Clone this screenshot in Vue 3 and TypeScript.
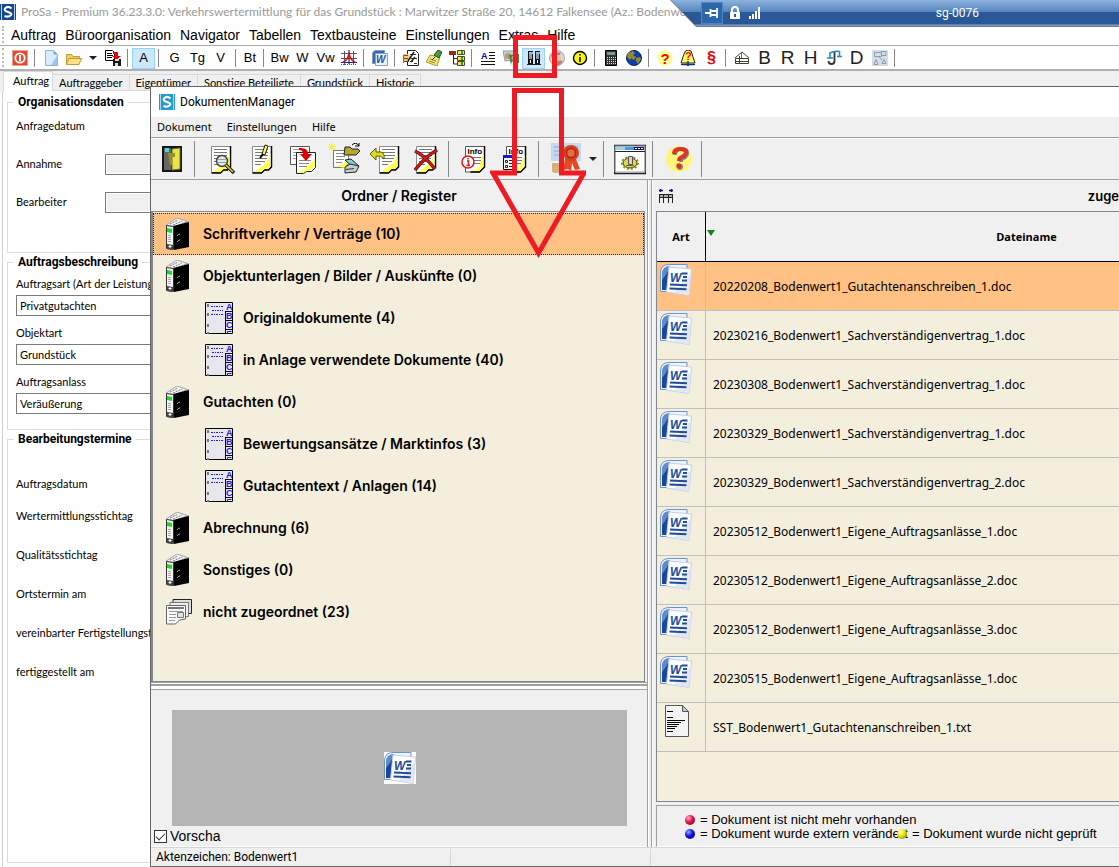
<script setup lang="ts">
import { ref } from 'vue'

interface Tool {
  kind: 'icon' | 'text' | 'sep' | 'caret'
  name?: string
  label?: string
  active?: boolean
  small?: boolean
  big?: boolean
}
interface Folder {
  title: string
  icon: 'binder' | 'register' | 'stack'
  child?: boolean
}

const sep: Tool = { kind: 'sep' }
const icon = (name: string, label: string, active = false): Tool => ({ kind: 'icon', name, label, active })
const text = (label: string, extra: Partial<Tool> = {}): Tool => ({ kind: 'text', label, ...extra })

const menu = ['Auftrag', 'Büroorganisation', 'Navigator', 'Tabellen', 'Textbausteine', 'Einstellungen', 'Extras', 'Hilfe']
const tabs = ['Auftrag', 'Auftraggeber', 'Eigentümer', 'Sonstige Beteiligte', 'Grundstück', 'Historie']

const mainTools: Tool[] = [
  icon('power', 'Beenden'), sep,
  icon('page', 'Neu'), icon('folder', 'Öffnen'), { kind: 'caret', label: 'Zuletzt geöffnet' }, icon('save', 'Speichern'), sep,
  text('A', { active: true }), sep,
  text('G'), text('Tg'), text('V'), sep,
  text('Bt', { small: true }), sep,
  text('Bw'), text('W'), text('Vw'), icon('chart', 'Diagramm'), sep,
  icon('wordSmall', 'Word'), sep,
  icon('checklist', 'Liste'), icon('note', 'Notiz'), icon('tree', 'Struktur'), sep,
  icon('textLines', 'Text'), icon('photos', 'Bilder'), icon('binders', 'DokumentenManager', true), icon('map', 'Karte'), icon('info', 'Info'), sep,
  icon('calc', 'Rechner'), icon('globe', 'Internet'), sep,
  icon('help', 'Hilfe'), icon('book', 'Handbuch'), icon('law', 'Gesetze'), sep,
  icon('house', 'Gebäude'), text('B', { big: true }), text('R', { big: true }), text('H', { big: true }),
  icon('scales', 'Justiz'), text('D', { big: true }), icon('flow', 'Ablauf'), sep,
]

const docTools: Tool[] = [
  icon('door', 'Schließen'), sep,
  icon('docSearch', 'Anzeigen'), icon('docEdit', 'Bearbeiten'), icon('docCopy', 'Kopieren'),
  icon('docScan', 'Scannen'), icon('docBack', 'Zurück'), icon('docDelete', 'Löschen'), sep,
  icon('docInfo', 'Info'), icon('docWindow', 'Info Fenster'), sep,
  icon('seal', 'Signatur'), { kind: 'caret', label: 'Signaturoptionen' }, sep,
  icon('settings', 'Einstellungen'), sep,
  icon('question', 'Hilfe'), sep,
]

const folders: Folder[] = [
  { title: 'Schriftverkehr / Verträge (10)', icon: 'binder' },
  { title: 'Objektunterlagen / Bilder / Auskünfte (0)', icon: 'binder' },
  { title: 'Originaldokumente (4)', icon: 'register', child: true },
  { title: 'in Anlage verwendete Dokumente (40)', icon: 'register', child: true },
  { title: 'Gutachten (0)', icon: 'binder' },
  { title: 'Bewertungsansätze / Marktinfos (3)', icon: 'register', child: true },
  { title: 'Gutachtentext / Anlagen (14)', icon: 'register', child: true },
  { title: 'Abrechnung (6)', icon: 'binder' },
  { title: 'Sonstiges (0)', icon: 'binder' },
  { title: 'nicht zugeordnet (23)', icon: 'stack' },
]

const files = [
  '20220208_Bodenwert1_Gutachtenanschreiben_1.doc',
  '20230216_Bodenwert1_Sachverständigenvertrag_1.doc',
  '20230308_Bodenwert1_Sachverständigenvertrag_1.doc',
  '20230329_Bodenwert1_Sachverständigenvertrag_1.doc',
  '20230329_Bodenwert1_Sachverständigenvertrag_2.doc',
  '20230512_Bodenwert1_Eigene_Auftragsanlässe_1.doc',
  '20230512_Bodenwert1_Eigene_Auftragsanlässe_2.doc',
  '20230512_Bodenwert1_Eigene_Auftragsanlässe_3.doc',
  '20230515_Bodenwert1_Eigene_Auftragsanlässe_1.doc',
  'SST_Bodenwert1_Gutachtenanschreiben_1.txt',
]

const orders = [
  { id: 'art', label: 'Auftragsart (Art der Leistung)', value: 'Privatgutachten' },
  { id: 'objekt', label: 'Objektart', value: 'Grundstück' },
  { id: 'anlass', label: 'Auftragsanlass', value: 'Veräußerung' },
]
const dates = ['Wertermittlungsstichtag', 'Qualitätsstichtag', 'Ortstermin am', 'vereinbarter Fertigstellungstermin', 'fertiggestellt am']

const selectedFolder = ref(0)
const selectedFile = ref(0)
const preview = ref(true)

// Torn sheet shared by the document icons (32 x 32 grid).
const sheet =
  '<path d="M6.500 3.500h19v20l-3 3h-4l-3 3h-9z" fill="#fff" stroke="#8a8a8a"/><path d="M25.500 3v21l-3 3h-4l-3 3h-9" fill="none" stroke="#000" stroke-width="1.500"/><path d="M24.500 11v12l-3 3h-3l-3 3H8l7-5 5-4z" fill="#ffff4d"/><path d="M9 6.500h13M9 9.500h13M9 12.500h13M9 15.500h12M9 18.500h10M9 21.500h6" stroke="#777"/>'
const infoSheet =
  '<path d="M6.500 3.500h19V24l-5 5h-14z" fill="#fff" stroke="#555"/><path d="M25.500 3v21l-5 5h-9" fill="none" stroke="#000" stroke-width="1.500"/><path d="M24.500 11v12l-4 5h-8l7-3z" fill="#ffff45"/><text x="8.500" y="11" font-family="Liberation Sans, sans-serif" font-weight="bold" font-size="8">Info</text><path d="M10 14.500h12M13 17.500h9M14 20.500h7" stroke="#777"/>'

const wordArt =
  '<path d="M.5 27.500V9Q.5.500 9 .500h18v8H8v19z" fill="#eef4fd" stroke="#6b93d0"/><path d="M2 26V10q0-8 8-8l-2 24z" fill="#5f8bcb"/><path d="M2 26V16q3-3 6-9v19z" fill="#1c4795"/><path d="M9 3l22.500 2L29 31.500 6.500 28z" fill="#fafcff" stroke="#c3cfe2"/><path d="M31 9l-2 22-15-2z" fill="#e1e8f3"/><text x="10" y="18" font-family="Liberation Sans, sans-serif" font-weight="bold" font-style="italic" font-size="12" fill="#234b96">W</text><path d="M22 9.500h5.500M23 13h4M22 16.500h5M10 20.500l17 .8M9.500 24.500l17 .8" stroke="#234b96" stroke-width="2"/>'

const art: Record<string, { box: string; body: string }> = {
  logo: { box: '0 0 16 16', body: '<rect width="16" height="16" fill="#14468c"/><path d="M1.500 0v16M14.500 0v16" stroke="#b9d2ee"/><path d="M11.500 4.500Q8 1.500 5.500 4T8 8t2.500 3.500T4.500 12" fill="none" stroke="#fff" stroke-width="2.200"/>' },
  logoLight: { box: '0 0 16 16', body: '<rect width="16" height="16" fill="#249bd0"/><path d="M1.500 0v16M14.500 0v16" stroke="#a8d8ef"/><path d="M11.500 4.500Q8 1.500 5.500 4T8 8t2.500 3.500T4.500 12" fill="none" stroke="#fff" stroke-width="2.200"/>' },
  power: { box: '0 0 16 16', body: '<rect x=".5" y=".5" width="15" height="15" fill="#e4492f" stroke="#f0a08f"/><circle cx="8" cy="8" r="4.700" fill="none" stroke="#fff" stroke-width="1.800"/><path d="M8 5v6" stroke="#fff" stroke-width="2"/>' },
  page: { box: '0 0 16 16', body: '<path d="M2.500.5h8l4 4v11h-12z" fill="#d9ecfc" stroke="#92b4d6"/><path d="M10.500.5v4h4z" fill="#78a9d8"/><path d="M8 15l6-9v9z" fill="#9cc9ee"/>' },
  folder: { box: '0 0 16 16', body: '<path d="M.5 14V4.500h5l1.500 2h6.500V8" fill="#f2cf5b" stroke="#c19a2f"/><path d="M.5 14.500L3 8.500h12.500L13 14.500z" fill="#ffe485" stroke="#c19a2f"/>' },
  save: { box: '0 0 16 16', body: '<path d="M.5.500h7l2 2v8h-9z" fill="#fff" stroke="#000"/><path d="M2 3.500h5M2 5.500h6M2 7.500h5" stroke="#000"/><path d="M8 2h5v4h3l-4.500 4L7 6h3V4H8z" fill="#f20000"/><path d="M8 9h8v7H8z" fill="#171717"/><path d="M10 9h4v2h-4zM10 13h3v3h-3z" fill="#ddd"/>' },
  chart: { box: '0 0 16 16', body: '<path d="M0 3.500h16M0 8.500h16M3.500 1v14M12.500 1v14" stroke="#556"/><path d="M0 12.500h16" stroke="#22a"/><path d="M8 0v14" stroke="#111"/><path d="M2 12q4-1 6-8 2 7 6 8" fill="none" stroke="#f00" stroke-width="1.500"/><path d="M0 14.500h16" stroke="#555" stroke-dasharray="1 1"/>' },
  wordSmall: { box: '0 0 16 16', body: '<path d="M.5 13.500V4q0-3 3-3.500h9v13z" fill="#3b64ad" stroke="#7a9dd4"/><path d="M3.500 3.500h12v12h-12z" fill="#edf4ff" stroke="#879fc6"/><text x="4" y="13" font-family="Liberation Sans, sans-serif" font-weight="bold" font-style="italic" font-size="10" fill="#28519d">W</text>' },
  checklist: { box: '0 0 16 16', body: '<path d="M4.500.500h8l3 3v12h-11z" fill="#fff" stroke="#222"/><path d="M7 4.500h6M7 8.500h7M7 11.500h3M11 13.500h3" stroke="#333"/><path d="M0 4h5l3 3-2 4H0z" fill="#f5c87b"/><path d="M0 5.500h5M0 8.500h5M0 11.500h6" stroke="#6b5212"/><path d="M5 11l6-9M8 12l4-5" stroke="#222" stroke-width="1.500"/><path d="M0 5v8" stroke="#0c9aa5" stroke-width="2"/>' },
  note: { box: '0 0 16 16', body: '<path d="M4 5l10 2-3 9-11-4z" fill="#f4e46d" stroke="#a69a35"/><path d="M4 9l6 2M3 11l6 2" stroke="#8f8a4d"/><path d="M8 5l4-5 4 2-3 6z" fill="#4b9a3e" stroke="#165a22"/><path d="M9 7l-3 3" stroke="#333"/>' },
  tree: { box: '0 0 16 16', body: '<path d="M0 1h7v4H0z" fill="#9b261a"/><path d="M4.500 5v9H8M4 8.500h4" fill="none" stroke="#222"/><path d="M8.500.500h7v4h-7zM8.500 6.500h7v4h-7zM8.500 11.500h7v4h-7z" fill="#f0e55c" stroke="#4c4b14"/><path d="M13 1v3M13 7v3M13 12v3" stroke="#329948" stroke-width="2"/>' },
  textLines: { box: '0 0 16 16', body: '<text x="1" y="9" font-family="Liberation Sans, sans-serif" font-weight="bold" font-size="9" fill="#0000a8">A</text><path d="M9 2.500h6M9 5.500h6M9 8.500h6M1 11.500h14M1 14.500h14" stroke="#111"/>' },
  photos: { box: '0 0 16 16', body: '<path d="M0 1h12l-2 9-8 1z" fill="#b4d5e8" stroke="#999"/><circle cx="5" cy="6" r="3" fill="#c7985f"/><path d="M6 5l10-1v9l-8 2z" fill="#35864d"/><path d="M7 16q2-6 5-5t3 5z" fill="#f3ead8"/><circle cx="11" cy="8" r="2.500" fill="#d39a68"/>' },
  binders: { box: '0 0 16 16', body: '<path d="M2 1h5v14H2zM9 1h5v14H9z" fill="#171717"/><path d="M3 2h4v2H3zM10 2h4v2h-4z" fill="#83bdff"/><path d="M3 4h3v5H3zM10 4h3v5h-3z" fill="#999"/><path d="M4.500 10v3M11.500 10v3" stroke="#fff"/><path d="M1 14.500h14" stroke="#222"/>' },
  map: { box: '0 0 16 16', body: '<circle cx="8" cy="8" r="7.500" fill="#d3d8df" stroke="#a5a5a5"/><path d="M2 5l5-3 5 1-3 5 5 4-5 4-5-3z" fill="#ac896f"/><circle cx="9" cy="8" r="3" fill="#e6c8a8"/>' },
  info: { box: '0 0 16 16', body: '<circle cx="8" cy="8" r="6.500" fill="#f8f514" stroke="#000" stroke-width="1.400"/><path d="M8 7v5M8 4v1.500" stroke="#000" stroke-width="1.500"/>' },
  calc: { box: '0 0 16 16', body: '<path d="M2.500.500h11v15h-11z" fill="#333" stroke="#000"/><path d="M4 2h8v3H4z" fill="#7b9d89"/><path d="M4 7.500h9M4 9.500h9M4 11.500h9M4 13.500h9" stroke="#ddd" stroke-dasharray="1 1"/>' },
  globe: { box: '0 0 16 16', body: '<circle cx="8" cy="8" r="7.500" fill="#0c3eae" stroke="#042564"/><path d="M2 3l5-2 2 2-2 2 3 2-2 3-3-2-1 2-3-3zM10 8l4-1 1 2-3 5-2-3z" fill="#968b28"/>' },
  help: { box: '0 0 16 16', body: '<circle cx="8" cy="8" r="7.500" fill="#ffff70"/><path d="M1 4h14M1 8h14M1 12h14" stroke="#fff" stroke-dasharray="1 1"/><text x="3.500" y="13.500" font-family="Liberation Sans, sans-serif" font-weight="bold" font-size="15" fill="#f00">?</text>' },
  book: { box: '0 0 16 16', body: '<path d="M1 13L4 4q1-4 4-4 4 0 4 4l3 9z" fill="#ffff60" stroke="#222"/><path d="M1 14.500h6l1 1 1-1h6M8 11v4" fill="none" stroke="#172d8b" stroke-width="1.500"/><text x="5" y="10" font-family="Liberation Sans, sans-serif" font-weight="bold" font-size="11" fill="#f00">?</text>' },
  law: { box: '0 0 16 16', body: '<text x="4" y="13" font-family="Liberation Sans, sans-serif" font-weight="bold" font-size="16" fill="#ed0000">§</text>' },
  house: { box: '0 0 16 16', body: '<path d="M1 8l7-6 7 6M1.500 8.500v5h13v-5zM5.500 6v8M2 11.500h12M5 8.500h9" fill="none" stroke="#3d3d33"/><path d="M7.500 2v6" stroke="#776b31"/>' },
  scales: { box: '0 0 16 16', body: '<path d="M8.500 2v9q0 3-3 3-3 0-3-3" fill="none" stroke="#333" stroke-width="1.800"/><path d="M3 3.500q5-3 11-2M4 3v5M13.500 1v5M1 8h6M11 6.500h5" fill="none" stroke="#168bc4" stroke-width="1.500"/>' },
  flow: { box: '0 0 16 16', body: '<path d="M0 0h16v16H0z" fill="#d9dcde"/><path d="M2.500 2.500h7v4h-7zM9 1.500h5v4H9M2 14.500l2-5 2 5zM10 13.500l2-4 2 4zM7 7l3 3" fill="none" stroke="#7da4be"/>' },
  door: { box: '0 0 32 32', body: '<path d="M6 3h20v26H6z" fill="#151515"/><path d="M8 5h7v22H8z" fill="#666"/><path d="M16 6l8-1v21l-8 1z" fill="#e8e34a" stroke="#777522"/><path d="M12 10h7v4h-3v8h-2z" fill="#99902a"/><path d="M9 5h4v4H9z" fill="#44d9de"/>' },
  docSearch: { box: '0 0 32 32', body: sheet + '<circle cx="17" cy="18" r="5.500" fill="#dcecef" stroke="#444" stroke-width="1.500"/><path d="M13 16.500h8M13 19.500h8" stroke="#93a0a0"/><path d="M21 22l8 8" stroke="#222" stroke-width="3.500"/><path d="M21 22l7 7" stroke="#e5ce20" stroke-width="1.500"/>' },
  docEdit: { box: '0 0 32 32', body: sheet + '<path d="M16 11l3-9 3 1-3 9z" fill="#fff34a" stroke="#222"/><path d="M14 15l3-4" stroke="#000" stroke-width="2"/>' },
  docCopy: { box: '0 0 32 32', body: '<path d="M3.500 3.500h19v18h-19z" fill="#fff" stroke="#555"/><path d="M6 6.500h13M6 9.500h13M6 12.500h13M6 15.500h13" stroke="#999"/><path d="M9.500 9.500h19v15l-4 4h-5l-3 2h-7z" fill="#fff" stroke="#222"/><path d="M28 16v8l-4 3h-4l-4 3h-5l8-5z" fill="#ffff4d"/><path d="M12 17.500h12M12 20.500h10M12 23.500h8" stroke="#888"/><path d="M12 5q9-1 9 6h4l-6 7-6-7h3q0-4-4-4z" fill="#e00000"/>' },
  docScan: { box: '0 0 32 32', body: '<path d="M5.500 7.500h15v13l-4 4h-11z" fill="#fff" stroke="#777"/><path d="M8 10.500h9M8 13.500h9M8 16.500h8M8 19.500h6" stroke="#888"/><path d="M6 23l8-1 4-5 3 1-4 7z" fill="#ffff4d"/><path d="M1 1l6 6M7 1L1 7M4 0v8M0 4h8" stroke="#f6ef20"/><path d="M17 4h5l2 2h6l2 2-4 4H16z" fill="#b5a52c" stroke="#222"/><path d="M24 2q4-4 7 1m-4 0h4V0" fill="none" stroke="#000"/><path d="M17 17l6-1 8 7-5 2z" fill="#82d3d5" stroke="#222"/><path d="M17 24l5-3 9 2-3 6-11 1z" fill="#c7cecc" stroke="#222"/><path d="M18 26.500l8-1" stroke="#333"/>' },
  docBack: { box: '0 0 32 32', body: '<g transform="translate(4)">' + sheet + '</g><path d="M1 11l6-6v4h5q4 1 3 7-3-4-8-3v4z" fill="#e0dc22" stroke="#5d590b"/>' },
  docDelete: { box: '0 0 32 32', body: sheet + '<path d="M5 8q9 4 20 18M27 7Q16 13 5 27" stroke="#4e1414" stroke-width="3.500" fill="none"/><path d="M5 8q9 4 20 18M27 7Q16 13 5 27" stroke="#d01818" stroke-width="2" fill="none"/>' },
  docInfo: { box: '0 0 32 32', body: infoSheet + '<circle cx="9" cy="19" r="6" fill="#fff" stroke="#d51717" stroke-width="1.500"/><path d="M8 18h1.500v4M7.500 22.500h3.500M9 15v1.500" stroke="#d51717" stroke-width="1.500" fill="none"/>' },
  docWindow: { box: '0 0 32 32', body: infoSheet + '<path d="M3.500 12.500h12v14h-12z" fill="#f4f4f4" stroke="#111"/><path d="M3 12h13v3H3z" fill="#111bd2"/><path d="M5.500 17.500h2v2h-2zM5.500 22.500h2v2h-2zM9 17.500h5M9 20.500h5M9 23.500h5" fill="none" stroke="#222"/>' },
  seal: { box: '0 0 32 32', body: '<path d="M2 0h30v18H2z" fill="#c2d9f2"/><path d="M5 4h24M5 8h24M5 12h24" stroke="#8fabc8"/><path d="M2 18h16v9H2z" fill="#eef3f9"/><path d="M3 20h9v9q-4 2-9 0z" fill="#d6b17c"/><path d="M16 16l-2 11 5-1 3 2 1-8 3 7 5-1-5-12z" fill="#e8481f"/><circle cx="22" cy="10" r="8" fill="#d8401a"/><circle cx="22" cy="10" r="4.500" fill="#ef6846" stroke="#a32d10" stroke-width="1.500"/>' },
  settings: { box: '0 0 32 32', body: '<path d="M.5 2.500h31v28H.5z" fill="#fff" stroke="#222" stroke-width="1.500"/><path d="M1 3h30v26H1z" fill="none" stroke="#999"/><path d="M2 4h9v3H2z" fill="#9bd1f0"/><path d="M11 4h9v3h-9z" fill="#3d9df0"/><path d="M20 4h10v3H20z" fill="#101070"/><path d="M21 5.500h2M24 5.500h2M27 5.500h2" stroke="#fff"/><path d="M1 8.500h30" stroke="#222"/><ellipse cx="16" cy="20" rx="7" ry="5" fill="#dfd951" stroke="#3b3911"/><ellipse cx="16" cy="20" rx="8" ry="6" fill="none" stroke="#8f8a25" stroke-width="2" stroke-dasharray="2 2"/><path d="M14.500 13.500h4v8h-4z" fill="#d4d4d4" stroke="#555"/><path d="M12 22.500h8" stroke="#6c6725"/>' },
  question: { box: '0 0 32 32', body: '<circle cx="16" cy="16" r="13" fill="#fff57a"/><path d="M12 12q0-6 6-6 7 0 6 5-1 3-4 4-2 1-2 4" fill="none" stroke="#888" stroke-width="4"/><path d="M11 11q0-5 6-5 7 0 6 4-1 3-4 4-3 1-3 4" fill="none" stroke="#dc3330" stroke-width="4"/><circle cx="17" cy="24" r="3" fill="#888"/><circle cx="16" cy="23" r="2.700" fill="#dc3330"/>' },
  binder: { box: '0 0 24 32', body: '<path d="M0 7L11 0l12 4-14 5z" fill="#f4f4f4" stroke="#a5a5a5"/><path d="M4 6l8-4M7 7l9-4M10 8l10-4" stroke="#777" stroke-dasharray="2 1"/><path d="M7 8l16-4v25l-15 3z" fill="#000"/><path d="M.5 7.500l7 1v23l-7-1z" fill="#f4f4f4" stroke="#333"/><path d="M1 10l5 1v4l-5-1z" fill="#14df1c"/><path d="M2 17.500h3M2 19.500h3M2 21.500h3M2 23.500h3" stroke="#aaa"/><path d="M1 26l6 1v5l-6-1z" fill="#444"/><path d="M2.500 28.500h3M4 27v3" stroke="#fff"/><path d="M11 18q1-2 3-2M11 24q1-2 3-2" stroke="#aaa" fill="none"/>' },
  register: { box: '0 0 28 32', body: '<path d="M.5.500h27v31H.5z" fill="#e7e6ed" stroke="#000"/><path d="M3 2v3M3 11v3M3 22v3M3 30v2" stroke="#777" stroke-width="2"/><path d="M6 4.500h13M7 8.500h11M6 12.500h12" stroke="#1919f0" stroke-dasharray="2 1 1 1"/><path d="M20.500 9.500V32M20 9.500h8M20 18.500h8M20 27.500h8" stroke="#000"/><g fill="#1717e2" font-family="Liberation Sans, sans-serif" font-size="9"><text x="21" y="8">A</text><text x="21" y="17">B</text><text x="21" y="26">C</text></g><path d="M22.500 32v-2.500h4" fill="none" stroke="#1717e2"/>' },
  stack: { box: '0 0 26 26', body: '<path d="M7 .5h18.500v14H7z" fill="#ddd" stroke="#222"/><path d="M4 3.500h18.500v14H4z" fill="#eee" stroke="#777"/><path d="M.5 6.500h19V20l-6 1-4 4h-9z" fill="#f9f9f9" stroke="#666"/><path d="M2 9h16" stroke="#777" stroke-width="2"/><path d="M3 12.500h14M3 15.500h7M3 18.500h7M3 21.500h6" stroke="#999"/><path d="M11.500 13.500h6v5h-6z" fill="#e2e2dd" stroke="#777"/>' },
  word: { box: '0 0 32 32', body: wordArt },
  txt: { box: '0 0 24 32', body: '<path d="M.5.500h17l6 6v25H.5z" fill="#f4f4f4" stroke="#555"/><path d="M17.500.500l6 6h-6z" fill="#ccc" stroke="#555"/><path d="M2 6.500h6M2 12.500h6M2 15.500h18M2 17.500h14M2 19.500h12M2 21.500h10M2 23.500h8M2 26.500h6" stroke="#000"/>' },
  columns: { box: '0 0 14 14', body: '<path d="M0 1.500h4M1.500 0v3M10 1.500h4M12.500 0v3" stroke="#101080" stroke-width="1.500"/><path d="M1 6h12v2H1z" fill="#aaa"/><path d="M0 5.500h14M0 8.500h14M.5 5v9M4.500 5v9M9.500 5v9M13.500 5v9" stroke="#222"/>' },
  pin: { box: '0 0 16 16', body: '<path d="M1 8h5M6.500 4v8M7 6h5M7 10h5M13 3v10" fill="none" stroke="#fff" stroke-width="1.800"/><path d="M7 9h6v2H7z" fill="#fff"/>' },
  lock: { box: '0 0 16 16', body: '<path d="M3 7h10v7H3z" fill="#fff"/><path d="M5 8V5q0-3 3-3t3 3v3" fill="none" stroke="#fff" stroke-width="2"/><path d="M8 9v3" stroke="#2b5797" stroke-width="2"/>' },
  signal: { box: '0 0 16 16', body: '<path d="M3 11v3M6 9v5M9 6v8M12 2v12" stroke="#fff" stroke-width="2"/>' },
}
</script>

<template>
  <main class="desktop">
    <header class="titlebar">
      <svg class="i16" :viewBox="art.logo.box" v-html="art.logo.body"></svg>
      <h1>ProSa - Premium 36.23.3.0: Verkehrswertermittlung für das Grundstück : Marwitzer Straße 20, 14612 Falkensee (Az.: Bodenwert1)</h1>
    </header>

    <nav class="menubar" aria-label="Hauptmenü">
      <button v-for="m in menu" :key="m" type="button">{{ m }}</button>
    </nav>

    <div class="toolbar" role="toolbar" aria-label="Werkzeuge">
      <template v-for="(t, i) in mainTools" :key="i">
        <span v-if="t.kind === 'sep'" class="sep"></span>
        <button v-else-if="t.kind === 'caret'" type="button" class="caret" :aria-label="t.label"></button>
        <button v-else type="button" class="tool" :class="{ active: t.active, small: t.small, big: t.big }" :aria-label="t.label">
          <template v-if="t.kind === 'text'">{{ t.label }}</template>
          <svg v-else class="i16" :viewBox="art[t.name!].box" v-html="art[t.name!].body"></svg>
        </button>
      </template>
    </div>

    <div class="tabs" role="tablist">
      <button v-for="(t, i) in tabs" :key="t" type="button" role="tab" :aria-selected="i === 0" :class="{ current: i === 0 }">{{ t }}</button>
    </div>

    <section class="sheet">
      <fieldset class="organisation">
        <legend>Organisationsdaten</legend>
        <div class="row"><span>Anfragedatum</span></div>
        <div class="row"><label for="annahme">Annahme</label><input id="annahme" type="text" disabled /></div>
        <div class="row"><label for="bearbeiter">Bearbeiter</label><input id="bearbeiter" type="text" disabled /></div>
      </fieldset>
      <fieldset class="description">
        <legend>Auftragsbeschreibung</legend>
        <div v-for="o in orders" :key="o.id" class="field">
          <label :for="o.id">{{ o.label }}</label>
          <select :id="o.id"><option>{{ o.value }}</option></select>
        </div>
      </fieldset>
      <fieldset class="schedule">
        <legend>Bearbeitungstermine</legend>
        <div class="row first">Auftragsdatum</div>
        <div v-for="d in dates" :key="d" class="row">{{ d }}</div>
      </fieldset>
    </section>

    <section class="dialog" role="dialog" aria-label="DokumentenManager">
      <header class="dialog-title">
        <svg class="i16" :viewBox="art.logoLight.box" v-html="art.logoLight.body"></svg>
        <h2>DokumentenManager</h2>
      </header>
      <nav class="dialog-menu" aria-label="Menü DokumentenManager">
        <button type="button">Dokument</button>
        <button type="button">Einstellungen</button>
        <button type="button">Hilfe</button>
      </nav>
      <div class="dialog-tools" role="toolbar" aria-label="Dokumentwerkzeuge">
        <template v-for="(t, i) in docTools" :key="i">
          <span v-if="t.kind === 'sep'" class="sep"></span>
          <button v-else-if="t.kind === 'caret'" type="button" class="caret" :aria-label="t.label"></button>
          <button v-else type="button" class="tool" :aria-label="t.label">
            <svg class="i32" :viewBox="art[t.name!].box" v-html="art[t.name!].body"></svg>
          </button>
        </template>
      </div>

      <div class="panes">
        <div class="left">
          <h3>Ordner / Register</h3>
          <ul class="folders">
            <li v-for="(f, i) in folders" :key="f.title">
              <button type="button" :class="{ child: f.child, selected: i === selectedFolder }" @click="selectedFolder = i">
                <svg :class="f.icon" :viewBox="art[f.icon].box" v-html="art[f.icon].body"></svg>
                <span>{{ f.title }}</span>
              </button>
            </li>
          </ul>
          <div class="splitter-h"></div>
          <div class="preview">
            <div class="canvas">
              <svg v-if="preview" class="i32 thumb" :viewBox="art.word.box" v-html="art.word.body"></svg>
            </div>
            <label class="check"><input v-model="preview" type="checkbox" /><span>Vorscha</span></label>
          </div>
        </div>
        <div class="splitter-v"></div>
        <div class="right">
          <div class="right-head">
            <button type="button" aria-label="Spaltenbreite"><svg class="cols" :viewBox="art.columns.box" v-html="art.columns.body"></svg></button>
            <h3>zuge</h3>
          </div>
          <div class="grid">
            <table>
              <thead>
                <tr><th class="kind">Art</th><th class="name"><i class="sort"></i>Dateiname</th></tr>
              </thead>
              <tbody>
                <tr v-for="(f, i) in files" :key="f" :class="{ selected: i === selectedFile }" @click="selectedFile = i">
                  <td class="kind">
                    <svg v-if="f.endsWith('.doc')" class="i32" :viewBox="art.word.box" v-html="art.word.body"></svg>
                    <svg v-else class="txt" :viewBox="art.txt.box" v-html="art.txt.body"></svg>
                  </td>
                  <td>{{ f }}</td>
                </tr>
              </tbody>
            </table>
          </div>
          <div class="legend">
            <p><i class="ball red"></i>= Dokument ist nicht mehr vorhanden</p>
            <p><i class="ball blue"></i><span class="changed">= Dokument wurde extern verändert</span><i class="ball yellow"></i>= Dokument wurde nicht geprüft</p>
          </div>
        </div>
      </div>

      <footer class="status">
        <span class="case">Aktenzeichen: Bodenwert1</span><span class="cell"></span><span class="rest"></span>
      </footer>
    </section>

    <div class="remote">
      <div class="remote-bar">
        <button type="button" class="pinned" aria-label="Anheften"><svg class="i16" :viewBox="art.pin.box" v-html="art.pin.body"></svg></button>
        <svg class="i16" :viewBox="art.lock.box" v-html="art.lock.body"></svg>
        <svg class="i16" :viewBox="art.signal.box" v-html="art.signal.body"></svg>
        <span class="host">sg-0076</span>
      </div>
    </div>

    <svg class="marker" viewBox="0 0 96 224" aria-hidden="true">
      <path d="M25.500 3.500h39v38h-39z" />
      <path d="M24.500 56.500h47V139h22.500L48.500 219 3 139h21.500z" />
    </svg>
  </main>
</template>

<style>
body {
  background: #fff;
}
</style>

<style scoped>
.desktop {
  position: relative;
  display: flex;
  flex-direction: column;
  min-height: 100vh;
  overflow: hidden;
  background: #fff;
  color: #000;
  font: 11px/16px Lato, Arial, sans-serif;
}
.desktop *,
.desktop *::before {
  box-sizing: border-box;
}
h1, h2, h3, p, ul {
  margin: 0;
  padding: 0;
}
button {
  margin: 0;
  padding: 0;
  border: 0;
  background: none;
  color: inherit;
  font: inherit;
}
svg {
  display: block;
  flex: none;
}
.i16 { width: 16px; height: 16px; }
.i32 { width: 32px; height: 32px; }

.titlebar {
  display: flex;
  align-items: center;
  gap: 5px;
  height: 24px;
}
.titlebar h1 {
  color: #999;
  font: 12px/16px Lato, sans-serif;
  white-space: nowrap;
}
.menubar {
  display: flex;
  gap: 9px;
  height: 22px;
  padding-left: 11px;
  border-bottom: 1px solid #aaa;
  font: 14px/16px "Liberation Sans", Arial, sans-serif;
  position: relative;
}
.menubar::before,
.toolbar::before {
  content: "";
  position: absolute;
  left: 2px;
  top: 2px;
  bottom: 2px;
  border-left: 2px dotted #bbb;
}
.toolbar {
  position: relative;
  display: flex;
  align-items: center;
  height: 25px;
  padding: 1px 0 0 8px;
  border-bottom: 2px solid #b0b0b0;
}
.tool {
  display: flex;
  align-items: center;
  justify-content: center;
  flex: none;
  width: 23px;
  height: 21px;
  font: 13px/16px "Liberation Sans", Arial, sans-serif;
}
.tool.small { width: 20px; }
.tool.big { font-size: 19px; color: #222; }
.tool.active { background: #cce8ff; box-shadow: inset 0 0 0 1px #99d1ff; }
.sep {
  flex: none;
  width: 8px;
  height: 18px;
  background: linear-gradient(#888, #888) 3px 0 / 1px 100% no-repeat;
}
.caret {
  display: flex;
  justify-content: center;
  flex: none;
  width: 16px;
}
.caret::before {
  content: "";
  border: 4px solid transparent;
  border-top-color: #222;
  border-bottom: 0;
}
.tabs {
  display: flex;
  align-items: flex-end;
  height: 20px;
  padding-left: 3px;
  background: #f0f0f0;
}
.tabs button {
  height: 17px;
  padding: 0 6px;
  border: 1px solid #d9d9d9;
  border-left: 0;
  white-space: nowrap;
}
.tabs .current {
  height: 20px;
  padding: 0 3px 2px 9px;
  border: 1px solid #d9d9d9;
  border-bottom: 0;
  background: #fff;
}
.sheet {
  flex: 1;
  margin-left: 2px;
  padding: 3px 0 0 4px;
  border-left: 1px solid #d0d0d0;
}
fieldset {
  display: flex;
  flex-direction: column;
  min-width: 0;
  margin: 0 0 1px;
  padding: 6px 0 0 8px;
  border: 1px solid #dcdcdc;
}
legend {
  margin-left: -2px;
  padding: 0 4px;
  font: bold 12px/16px Roboto, Arial, sans-serif;
}
.row {
  display: flex;
  align-items: center;
  height: 20px;
  white-space: nowrap;
}
.row label { width: 89px; }
.row input {
  flex: 1;
  height: 21px;
  border: 1px solid #7a7a7a;
  background: #f0f0f0;
  box-shadow: inset 0 0 0 1px #fff;
}
.organisation { gap: 18px; padding-bottom: 40px; }
.description { gap: 9px; padding-bottom: 15px; }
.field { display: flex; flex-direction: column; gap: 3px; }
.field select {
  appearance: none;
  height: 21px;
  padding: 0 3px;
  border: 1px solid #7a7a7a;
  border-radius: 0;
  background: #fff;
  color: #000;
  font: inherit;
}
.schedule { gap: 19px; padding-top: 27px; padding-bottom: 180px; }
.schedule .first { margin-bottom: -7px; }

.dialog {
  position: absolute;
  left: 150px;
  right: 0;
  top: 86px;
  bottom: 0;
  display: flex;
  flex-direction: column;
  border: 1px solid #666;
  border-right: 0;
  background: #f0f0f0;
}
.dialog-title {
  display: flex;
  align-items: center;
  gap: 5px;
  height: 30px;
  padding-left: 8px;
  background: #fff;
}
.dialog-title h2 { font: 12px/16px Roboto, sans-serif; }
.dialog-menu {
  display: flex;
  gap: 15px;
  height: 21px;
  padding-left: 6px;
  border-bottom: 1px solid #a0a0a0;
  font: 11px/16px "Noto Sans", sans-serif;
}
.dialog-tools {
  display: flex;
  align-items: center;
  height: 42px;
  border-top: 1px solid #fff;
  border-bottom: 1px solid #a0a0a0;
}
.dialog-tools .tool { width: 41px; height: 36px; }
.dialog-tools .sep { height: 36px; background-position: 2px 0; }
.panes {
  flex: 1;
  display: flex;
  min-height: 0;
}
.left {
  flex: none;
  display: flex;
  flex-direction: column;
  width: 496px;
}
h3 {
  flex: none;
  height: 31px;
  font: 600 14px/32px Inter, Arial, sans-serif;
  text-align: center;
}
.folders {
  flex: 1;
  list-style: none;
  border: 1px solid #828790;
  border-left-width: 2px;
  margin-right: 2px;
  padding-top: 1px;
  background: #f4eedc;
}
.folders button {
  display: flex;
  align-items: center;
  width: 100%;
  height: 42px;
  padding-left: 13px;
  font: 600 14px/18px Inter, Arial, sans-serif;
}
.folders svg { height: 32px; }
.folders .binder { width: 24px; margin-right: 13px; }
.folders .register { width: 28px; margin-right: 10px; }
.folders .stack { width: 26px; height: 26px; margin-right: 11px; }
.folders .child { padding-left: 52px; }
.folders .selected { background: #ffc184; outline: 1px dotted #222; outline-offset: -1px; }
.splitter-h {
  flex: none;
  height: 8px;
  border: 1px solid #a0a0a0;
  border-width: 1px 0;
  background: linear-gradient(#fff, #fff 1px, #a0a0a0 1px, #a0a0a0 3px, #fff 3px);
}
.preview {
  flex: none;
  padding: 20px 20px 0 21px;
  height: 157px;
  border-bottom: 1px solid #fff;
}
.canvas {
  display: flex;
  align-items: center;
  justify-content: center;
  height: 116px;
  background: #b4b4b4;
}
.thumb { background: #fff; }
.check {
  display: flex;
  align-items: center;
  gap: 3px;
  height: 20px;
  margin-left: -18px;
  font: 14px/16px "Liberation Sans", Arial, sans-serif;
}
.check input {
  appearance: none;
  display: flex;
  justify-content: center;
  width: 13px;
  height: 13px;
  margin: 0;
  border: 1px solid #333;
  background: #fff;
}
.check input:checked::before {
  content: "";
  width: 9px;
  height: 5px;
  margin-top: 2px;
  border: solid #333;
  border-width: 0 0 1px 1px;
  transform: rotate(-45deg);
}
.splitter-v {
  flex: none;
  width: 9px;
  border-left: 1px solid #a0a0a0;
  background: linear-gradient(90deg, #fff 1px, #f0f0f0 1px, #f0f0f0 3px, #a0a0a0 3px, #a0a0a0 4px, #fff 4px, #fff 5px, #f0f0f0 5px);
}
.right {
  flex: 1;
  display: flex;
  flex-direction: column;
  min-width: 0;
}
.right-head {
  display: flex;
  justify-content: space-between;
  align-items: center;
  height: 31px;
  padding-left: 3px;
}
.right-head h3 { font-size: 13px; }
.cols { width: 14px; height: 14px; }
.grid {
  flex: 1;
  min-height: 0;
  overflow: hidden;
  border: 1px solid #828790;
  border-right: 0;
  background: #f4eedc;
}
table {
  border-collapse: separate;
  border-spacing: 0;
  table-layout: fixed;
  width: 690px;
  font: 12px/16px "Noto Sans", sans-serif;
}
th {
  height: 50px;
  padding: 0;
  border-bottom: 1px solid #000;
  background: #f0f0f0;
  font: bold 11px/16px "Open Sans", sans-serif;
}
.kind { width: 49px; }
th.kind { border-right: 1px solid #000; }
th.name { position: relative; }
td {
  height: 49px;
  padding: 1px 7px 0;
  border-bottom: 1px solid #c0c0c0;
  white-space: nowrap;
}
td.kind {
  padding: 2px 0 0 3px;
  border-right: 1px solid #c0c0c0;
  vertical-align: top;
}
td .txt { width: 24px; height: 32px; margin-left: 5px; }
tr.selected td { background: #ffc184; }
.sort {
  position: absolute;
  left: 1px;
  top: 18px;
  border: 4px solid transparent;
  border-top: 6px solid #14801e;
  border-bottom: 0;
}
.legend {
  flex: none;
  height: 42px;
  margin-top: 3px;
  padding: 7px 0 0 28px;
  border: 1px solid #a0a0a0;
  border-right: 0;
  border-bottom-color: #fff;
  font: 13px/14px "Liberation Sans", Arial, sans-serif;
  white-space: nowrap;
}
.legend p { display: flex; align-items: center; gap: 5px; }
.ball { position: relative; width: 10px; height: 10px; border-radius: 50%; flex: none; }
.red { background: radial-gradient(circle at 35% 30%, #ffb0c0, #e0104a 45%, #70001c); }
.blue { background: radial-gradient(circle at 35% 30%, #a0a0ff, #1010e0 45%, #000060); }
.yellow { background: radial-gradient(circle at 35% 30%, #ffffc0, #e8e000 45%, #6a6400); }
.changed { width: 192px; }
.status {
  display: flex;
  align-items: center;
  flex: none;
  height: 19px;
  border-top: 1px solid #d5d5d5;
  font: 12px/16px Roboto, Arial, sans-serif;
}
.case { width: 300px; padding-left: 5px; border-right: 1px solid #d5d5d5; }
.cell { width: 200px; height: 16px; border-right: 1px solid #d5d5d5; }
.rest { flex: 1; }

.remote {
  position: absolute;
  left: 670px;
  right: 0;
  top: 0;
  height: 27px;
  background: #777;
  clip-path: polygon(0 0, 100% 0, 100% 100%, 26px 100%);
}
.remote-bar {
  display: flex;
  align-items: center;
  gap: 4px;
  height: 26px;
  padding-left: 31px;
  background: linear-gradient(#8db2dd, #5384bd 12px, #2b5797 12px, #2b5797 24px, #7ba0d0 25px);
  clip-path: polygon(1px 0, 100% 0, 100% 100%, 26px 100%);
}
.pinned { padding: 2px; border: 1px solid #4e86c4; background: #2d66ab; }
.host {
  flex: 1;
  padding-right: 140px;
  color: #fff;
  font: 12px/16px Roboto, sans-serif;
  text-align: right;
}
.marker {
  position: absolute;
  left: 490px;
  top: 34px;
  width: 96px;
  height: 224px;
  fill: none;
  stroke: #ed1c24;
  stroke-width: 5px;
  pointer-events: none;
}
</style>
